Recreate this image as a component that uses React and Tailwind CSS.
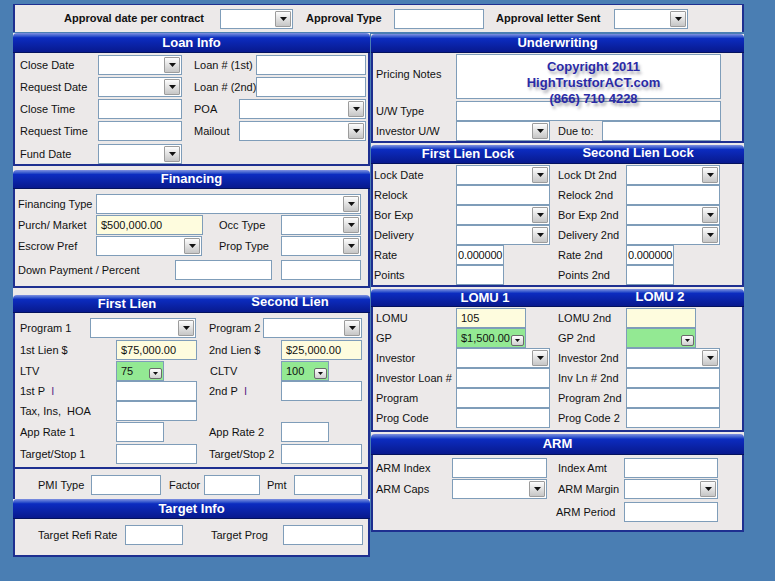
import React from 'react';

function Bar({ h, className = '', children }) {
  return (
    <div className={`flex items-center rounded-t-[4px] border-b border-[#04125e] bg-linear-to-b from-[#8090e0] via-[#0c2cc0] via-25% to-[#08198e] text-[13px] font-bold text-white ${h} ${className}`}>
      {children}
    </div>
  );
}

function Body({ h, className = '', children }) {
  return (
    <div className={`border-x-2 border-b-2 border-[#1e2f90] bg-[#ece9e9] ${h} ${className}`}>
      {children}
    </div>
  );
}

function Row({ mt = '', children }) {
  return <div className={`flex h-[20px] items-center ${mt}`}>{children}</div>;
}

function Lbl({ w, ml = '', children }) {
  return <span className={`shrink-0 whitespace-nowrap ${w} ${ml}`}>{children}</span>;
}

function Box({ w, ml = '', h = 'h-[20px]', bg = 'bg-white', pl = 'pl-[4px]', children }) {
  return (
    <div className={`flex shrink-0 items-center overflow-hidden whitespace-nowrap border border-[#7f9db9] ${pl} ${w} ${h} ${bg} ${ml}`}>
      {children}
    </div>
  );
}

function Arrow() {
  return (
    <span className="flex h-[16px] w-[16px] shrink-0 items-center justify-center rounded-[1px] border border-[#9c9c9c] bg-linear-to-b from-[#fdfdfd] to-[#c6c6c6]">
      <svg width="7" height="4" viewBox="0 0 7 4">
        <path d="M0 0h7L3.5 4z" fill="#111" />
      </svg>
    </span>
  );
}

function Combo({ w, ml = '' }) {
  return (
    <div className={`flex h-[20px] shrink-0 items-center justify-end border border-[#7f9db9] bg-white pr-[1px] ${w} ${ml}`}>
      <Arrow />
    </div>
  );
}

function GCombo({ w, ml = '', children }) {
  return (
    <div className={`flex h-[20px] shrink-0 border border-[#7f9db9] bg-[#93e993] pl-[4px] ${w} ${ml}`}>
      <span className="flex-1 self-center whitespace-nowrap">{children}</span>
      <span className="mb-[1px] mr-[1px] flex h-[11px] w-[13px] items-center justify-center self-end rounded-[2px] border border-[#6a6a6a] bg-linear-to-b from-white to-[#d0d0d0]">
        <svg width="5" height="3" viewBox="0 0 5 3">
          <path d="M0 0h5L2.5 3z" fill="#111" />
        </svg>
      </span>
    </div>
  );
}

// rate boxes are narrow, the value just fits
function RateBox() {
  return (
    <Box w="w-[48px]" pl="pl-[1px]">
      <span className="tracking-[-0.2px]">0.000000</span>
    </Box>
  );
}

function PI({ n }) {
  return (
    <>
      {n} P&nbsp;&nbsp;<span className="text-[#5b2a86]">I</span>
    </>
  );
}

function TopBar() {
  return (
    <div className="flex h-[28px] w-[731px] items-center border-x-2 border-t border-[#1e2f90] bg-[#ece9e9] font-bold">
      <Lbl w="w-[156px]" ml="ml-[49px]">Approval date per contract</Lbl>
      <Combo w="w-[73px]" />
      <Lbl w="w-[88px]" ml="ml-[13px]">Approval Type</Lbl>
      <Box w="w-[90px]" />
      <Lbl w="w-[118px]" ml="ml-[12px]">Approval letter Sent</Lbl>
      <Combo w="w-[74px]" />
    </div>
  );
}

function LeftColumn() {
  return (
    <div className="mt-[1px] w-[357px] bg-[#ece9e9]">
      <Bar h="h-[20px]" className="justify-center">Loan Info</Bar>
      <Body h="h-[113px]" className="pt-[2px]">
        <Row>
          <Lbl w="w-[78px]" ml="ml-[5px]">Close Date</Lbl>
          <Combo w="w-[84px]" />
          <Lbl w="w-[62px]" ml="ml-[12px]">Loan # (1st)</Lbl>
          <Box w="w-[110px]" />
        </Row>
        <Row mt="mt-[2px]">
          <Lbl w="w-[78px]" ml="ml-[5px]">Request Date</Lbl>
          <Combo w="w-[84px]" />
          <Lbl w="w-[62px]" ml="ml-[12px]">Loan # (2nd)</Lbl>
          <Box w="w-[110px]" />
        </Row>
        <Row mt="mt-[2px]">
          <Lbl w="w-[78px]" ml="ml-[5px]">Close Time</Lbl>
          <Box w="w-[84px]" />
          <Lbl w="w-[45px]" ml="ml-[12px]">POA</Lbl>
          <Combo w="w-[127px]" />
        </Row>
        <Row mt="mt-[2px]">
          <Lbl w="w-[78px]" ml="ml-[5px]">Request Time</Lbl>
          <Box w="w-[84px]" />
          <Lbl w="w-[45px]" ml="ml-[12px]">Mailout</Lbl>
          <Combo w="w-[127px]" />
        </Row>
        <Row mt="mt-[3px]">
          <Lbl w="w-[78px]" ml="ml-[5px]">Fund Date</Lbl>
          <Combo w="w-[84px]" />
        </Row>
      </Body>

      <Bar h="h-[19px]" className="mt-[4px] justify-center">Financing</Bar>
      <Body h="h-[99px]" className="pt-[5px]">
        <Row>
          <Lbl w="w-[78px]" ml="ml-[3px]">Financing Type</Lbl>
          <Combo w="w-[265px]" />
        </Row>
        <Row mt="mt-[1px]">
          <Lbl w="w-[78px]" ml="ml-[3px]">Purch/ Market</Lbl>
          <Box w="w-[107px]" bg="bg-[#fefcde]">$500,000.00</Box>
          <Lbl w="w-[62px]" ml="ml-[16px]">Occ Type</Lbl>
          <Combo w="w-[80px]" />
        </Row>
        <Row mt="mt-[1px]">
          <Lbl w="w-[78px]" ml="ml-[3px]">Escrow Pref</Lbl>
          <Combo w="w-[106px]" />
          <Lbl w="w-[62px]" ml="ml-[17px]">Prop Type</Lbl>
          <Combo w="w-[80px]" />
        </Row>
        <Row mt="mt-[4px]">
          <Lbl w="w-[157px]" ml="ml-[3px]">Down Payment / Percent</Lbl>
          <Box w="w-[97px]" />
          <Box w="w-[80px]" ml="ml-[9px]" />
        </Row>
      </Body>

      <Bar h="h-[18px]" className="mt-[7px]">
        <span className="w-[228px] text-center">First Lien</span>
        <span className="-mt-[3px] w-[98px] text-center">Second Lien</span>
      </Bar>
      <Body h="h-[156px]" className="pt-[5px]">
        <Row>
          <Lbl w="w-[70px]" ml="ml-[5px]">Program 1</Lbl>
          <Combo w="w-[106px]" />
          <Lbl w="w-[54px]" ml="ml-[13px]">Program 2</Lbl>
          <Combo w="w-[99px]" />
        </Row>
        <Row mt="mt-[2px]">
          <Lbl w="w-[96px]" ml="ml-[5px]">1st Lien $</Lbl>
          <Box w="w-[81px]" bg="bg-[#fefcde]">$75,000.00</Box>
          <Lbl w="w-[72px]" ml="ml-[12px]">2nd Lien $</Lbl>
          <Box w="w-[81px]" bg="bg-[#fefcde]">$25,000.00</Box>
        </Row>
        <Row mt="mt-[1px]">
          <Lbl w="w-[96px]" ml="ml-[5px]">LTV</Lbl>
          <GCombo w="w-[48px]">75</GCombo>
          <Lbl w="w-[71px]" ml="ml-[46px]">CLTV</Lbl>
          <GCombo w="w-[48px]">100</GCombo>
        </Row>
        <Row>
          <Lbl w="w-[96px]" ml="ml-[5px]"><PI n="1st" /></Lbl>
          <Box w="w-[81px]" />
          <Lbl w="w-[72px]" ml="ml-[12px]"><PI n="2nd" /></Lbl>
          <Box w="w-[81px]" />
        </Row>
        <Row>
          <Lbl w="w-[96px]" ml="ml-[5px]">Tax, Ins,&nbsp; HOA</Lbl>
          <Box w="w-[81px]" />
        </Row>
        <Row mt="mt-[1px]">
          <Lbl w="w-[96px]" ml="ml-[5px]">App Rate 1</Lbl>
          <Box w="w-[48px]" />
          <Lbl w="w-[72px]" ml="ml-[45px]">App Rate 2</Lbl>
          <Box w="w-[48px]" />
        </Row>
        <Row mt="mt-[2px]">
          <Lbl w="w-[96px]" ml="ml-[5px]">Target/Stop 1</Lbl>
          <Box w="w-[81px]" />
          <Lbl w="w-[72px]" ml="ml-[12px]">Target/Stop 2</Lbl>
          <Box w="w-[81px]" />
        </Row>
      </Body>

      <div className="h-[30px] border-x-2 border-[#1e2f90] pt-[6px]">
        <Row>
          <Lbl w="w-[53px]" ml="ml-[23px]">PMI Type</Lbl>
          <Box w="w-[70px]" />
          <Lbl w="w-[35px]" ml="ml-[8px]">Factor</Lbl>
          <Box w="w-[56px]" />
          <Lbl w="w-[27px]" ml="ml-[7px]">Pmt</Lbl>
          <Box w="w-[68px]" />
        </Row>
      </div>

      <Bar h="h-[20px]" className="justify-center">Target Info</Bar>
      <Body h="h-[38px]" className="pt-[6px]">
        <Row>
          <Lbl w="w-[87px]" ml="ml-[23px]">Target Refi Rate</Lbl>
          <Box w="w-[58px]" />
          <Lbl w="w-[72px]" ml="ml-[28px]">Target Prog</Lbl>
          <Box w="w-[80px]" />
        </Row>
      </Body>
    </div>
  );
}

function RightColumn() {
  return (
    <div className="mt-[2px] w-[373px] bg-[#ece9e9]">
      <Bar h="h-[19px]" className="justify-center">Underwriting</Bar>
      <Body h="h-[90px]" className="relative pt-[1px]">
        <div className="flex">
          <Lbl w="w-[80px]" ml="ml-[3px] mt-[12px]">Pricing Notes</Lbl>
          <Box w="w-[265px]" h="h-[45px]" />
        </div>
        <Row mt="mt-[2px]">
          <Lbl w="w-[80px]" ml="ml-[3px]">U/W Type</Lbl>
          <Box w="w-[265px]" />
        </Row>
        <Row>
          <Lbl w="w-[80px]" ml="ml-[3px]">Investor U/W</Lbl>
          <Combo w="w-[94px]" />
          <Lbl w="w-[44px]" ml="ml-[8px]">Due to:</Lbl>
          <Box w="w-[119px]" />
        </Row>
        {/* watermark over the notes box */}
        <div className="pointer-events-none absolute left-[88px] top-[6px] w-[265px] text-center text-[13px] font-bold leading-[16px] text-[#2a2aa6] [text-shadow:2px_3px_3px_rgba(60,60,80,0.45)]">
          <div>Copyright 2011</div>
          <div>HighTrustforACT.com</div>
          <div>(866) 710 4228</div>
        </div>
      </Body>

      <Bar h="h-[19px]" className="mt-[2px]">
        <span className="w-[194px] text-center">First Lien Lock</span>
        <span className="-mt-[2px] w-[146px] text-center">Second Lien Lock</span>
      </Bar>
      <Body h="h-[123px]" className="pt-[1px]">
        <Row>
          <Lbl w="w-[82px]" ml="ml-[1px]">Lock Date</Lbl>
          <Combo w="w-[94px]" />
          <Lbl w="w-[68px]" ml="ml-[8px]">Lock Dt 2nd</Lbl>
          <Combo w="w-[94px]" />
        </Row>
        <Row>
          <Lbl w="w-[82px]" ml="ml-[1px]">Relock</Lbl>
          <Box w="w-[94px]" />
          <Lbl w="w-[68px]" ml="ml-[8px]">Relock 2nd</Lbl>
          <Box w="w-[94px]" />
        </Row>
        <Row>
          <Lbl w="w-[82px]" ml="ml-[1px]">Bor Exp</Lbl>
          <Combo w="w-[94px]" />
          <Lbl w="w-[68px]" ml="ml-[8px]">Bor Exp 2nd</Lbl>
          <Combo w="w-[94px]" />
        </Row>
        <Row>
          <Lbl w="w-[82px]" ml="ml-[1px]">Delivery</Lbl>
          <Combo w="w-[94px]" />
          <Lbl w="w-[68px]" ml="ml-[8px]">Delivery 2nd</Lbl>
          <Combo w="w-[94px]" />
        </Row>
        <Row>
          <Lbl w="w-[82px]" ml="ml-[1px]">Rate</Lbl>
          <RateBox />
          <Lbl w="w-[68px]" ml="ml-[54px]">Rate 2nd</Lbl>
          <RateBox />
        </Row>
        <Row>
          <Lbl w="w-[82px]" ml="ml-[1px]">Points</Lbl>
          <Box w="w-[48px]" />
          <Lbl w="w-[68px]" ml="ml-[54px]">Points 2nd</Lbl>
          <Box w="w-[48px]" />
        </Row>
      </Body>

      <Bar h="h-[18px]" className="mt-[2px]">
        <span className="w-[228px] text-center">LOMU 1</span>
        <span className="-mt-[2px] w-[122px] text-center">LOMU 2</span>
      </Bar>
      <Body h="h-[125px]" className="pt-[1px]">
        <Row>
          <Lbl w="w-[80px]" ml="ml-[3px]">LOMU</Lbl>
          <Box w="w-[70px]" bg="bg-[#fefcde]">105</Box>
          <Lbl w="w-[68px]" ml="ml-[32px]">LOMU 2nd</Lbl>
          <Box w="w-[70px]" bg="bg-[#fefcde]" />
        </Row>
        <Row>
          <Lbl w="w-[80px]" ml="ml-[3px]">GP</Lbl>
          <GCombo w="w-[70px]">$1,500.00</GCombo>
          <Lbl w="w-[68px]" ml="ml-[32px]">GP 2nd</Lbl>
          <GCombo w="w-[70px]" />
        </Row>
        <Row>
          <Lbl w="w-[80px]" ml="ml-[3px]">Investor</Lbl>
          <Combo w="w-[94px]" />
          <Lbl w="w-[68px]" ml="ml-[8px]">Investor 2nd</Lbl>
          <Combo w="w-[94px]" />
        </Row>
        <Row>
          <Lbl w="w-[80px]" ml="ml-[3px]">Investor Loan #</Lbl>
          <Box w="w-[94px]" />
          <Lbl w="w-[68px]" ml="ml-[8px]">Inv Ln # 2nd</Lbl>
          <Box w="w-[94px]" />
        </Row>
        <Row>
          <Lbl w="w-[80px]" ml="ml-[3px]">Program</Lbl>
          <Box w="w-[94px]" />
          <Lbl w="w-[68px]" ml="ml-[8px]">Program 2nd</Lbl>
          <Box w="w-[94px]" />
        </Row>
        <Row>
          <Lbl w="w-[80px]" ml="ml-[3px]">Prog Code</Lbl>
          <Box w="w-[94px]" />
          <Lbl w="w-[68px]" ml="ml-[8px]">Prog Code 2</Lbl>
          <Box w="w-[94px]" />
        </Row>
      </Body>

      <Bar h="h-[21px]" className="mt-[2px] justify-center">ARM</Bar>
      <Body h="h-[77px]" className="pt-[3px]">
        <Row>
          <Lbl w="w-[76px]" ml="ml-[3px]">ARM Index</Lbl>
          <Box w="w-[95px]" />
          <Lbl w="w-[66px]" ml="ml-[11px]">Index Amt</Lbl>
          <Box w="w-[94px]" />
        </Row>
        <Row mt="mt-[1px]">
          <Lbl w="w-[76px]" ml="ml-[3px]">ARM Caps</Lbl>
          <Combo w="w-[95px]" />
          <Lbl w="w-[66px]" ml="ml-[11px]">ARM Margin</Lbl>
          <Combo w="w-[94px]" />
        </Row>
        <Row mt="mt-[3px]">
          <Lbl w="w-[68px]" ml="ml-[183px]">ARM Period</Lbl>
          <Box w="w-[94px]" />
        </Row>
      </Body>
    </div>
  );
}

export default function App() {
  return (
    <div className="h-[581px] w-[775px] overflow-hidden bg-[#4a7eb3] pl-[13px] pt-[4px] font-['Liberation_Sans',Arial,sans-serif] text-[11px] text-[#111]">
      <TopBar />
      <div className="flex items-start gap-[1px]">
        <LeftColumn />
        <RightColumn />
      </div>
    </div>
  );
}
